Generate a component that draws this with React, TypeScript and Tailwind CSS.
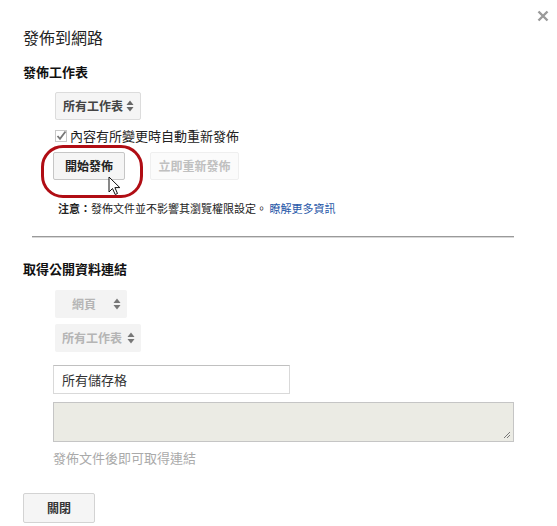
import React from 'react';

const font = { fontFamily: '"Noto Sans CJK TC", "Noto Sans CJK SC", sans-serif' };

function Arrows({ color }: { color: string }) {
  return (
    <svg width="8" height="12" viewBox="0 0 8 12">
      <path d="M4 0.5 L7.5 5 L0.5 5 Z" fill={color} />
      <path d="M4 11.5 L7.5 7 L0.5 7 Z" fill={color} />
    </svg>
  );
}

function SelectBox({ label, disabled, w, pl }: { label: string; disabled?: boolean; w: string; pl: string }) {
  return (
    <div
      className={
        'flex h-[28px] items-center justify-between pr-[6px] rounded-[2px] text-[12px] font-bold ' +
        w +
        ' ' +
        pl +
        (disabled
          ? ' bg-[#f3f3f3] text-[#b5b5b5]'
          : ' bg-[#f5f5f5] border border-[#dcdcdc] text-[#444]')
      }
    >
      <span className="leading-none">{label}</span>
      <Arrows color={disabled ? '#777' : '#666'} />
    </div>
  );
}

function Cursor() {
  return (
    <svg width="13" height="20" viewBox="0 0 13 20" className="absolute left-[55px] top-[24px]">
      <path
        d="M1 1 L1 16 L4.5 12.5 L7.2 18.5 L9.5 17.5 L6.9 11.6 L11.8 11.6 Z"
        fill="#fff"
        stroke="#111"
        strokeWidth="1"
        strokeLinejoin="round"
      />
    </svg>
  );
}

export default function App() {
  return (
    <div className="relative w-[557px] h-[526px] bg-white text-[#222]" style={font}>
      <svg width="12" height="12" viewBox="0 0 12 12" className="absolute left-[537px] top-[10px]">
        <path d="M1.5 1.5 L10.5 10.5 M10.5 1.5 L1.5 10.5" stroke="#9a9a9a" strokeWidth="2.4" />
      </svg>

      <div className="flex flex-col pl-[23px] pt-[27px]">
        <div className="h-[20px] text-[16px] leading-[20px] text-[#222]">發佈到網路</div>
        <div className="mt-[17px] h-[16px] text-[13px] leading-[16px] font-bold text-[#111]">發佈工作表</div>

        <div className="ml-[32px] mt-[12px]">
          <SelectBox label="所有工作表" w="w-[86px]" pl="pl-[7px]" />
        </div>

        <div className="ml-[32px] mt-[8px] flex h-[16px] items-center">
          <svg width="12" height="12" viewBox="0 0 12 12">
            <rect x="0.5" y="0.5" width="11" height="11" fill="#fff" stroke="#c8c8c8" />
            <path d="M2.5 6 L5 8.8 L10.5 1.5" fill="none" stroke="#777" strokeWidth="1.8" />
          </svg>
          <span className="ml-[3px] text-[13px] leading-[16px] text-[#222]">內容有所變更時自動重新發佈</span>
        </div>

        <div className="relative ml-[30px] mt-[8px] flex h-[28px] items-center gap-[25px]">
          <div className="flex h-[28px] w-[72px] items-center justify-center rounded-[2px] border border-[#c6c6c6] bg-[#f5f5f5] text-[12px] font-bold text-[#222]">
            開始發佈
          </div>
          <div className="flex h-[28px] w-[89px] items-center justify-center rounded-[2px] border border-[#efefef] bg-[#fbfbfb] text-[12px] font-bold text-[#c0c0c0]">
            立即重新發佈
          </div>
          <div className="absolute left-[-12px] top-[-7px] h-[53px] w-[102px] rounded-[22px] border-[3px] border-[#b00d14]" />
          <Cursor />
        </div>

        <div className="ml-[35px] mt-[21px] h-[14px] text-[11px] leading-[14px] text-[#222]">
          <span className="font-bold">注意：</span>發佈文件並不影響其瀏覽權限設定。 <span className="text-[#1f57a8]">瞭解更多資訊</span>
        </div>

        <div className="ml-[9px] mt-[21px] w-[482px] h-[2px] border-t border-[#9a9a9a] border-b border-b-[#d8d8d8]" />

        <div className="mt-[23px] h-[16px] text-[13px] leading-[16px] font-bold text-[#111]">取得公開資料連結</div>

        <div className="ml-[32px] mt-[13px]">
          <SelectBox label="網頁" disabled w="w-[72px]" pl="pl-[17px]" />
        </div>
        <div className="ml-[32px] mt-[6px]">
          <SelectBox label="所有工作表" disabled w="w-[86px]" pl="pl-[7px]" />
        </div>

        <div className="ml-[30px] mt-[13px] flex h-[29px] w-[237px] items-center border border-[#d9d9d9] border-t-[#c0c0c0] pl-[8px] text-[13px] text-[#333]">
          所有儲存格
        </div>

        <div className="relative ml-[30px] mt-[8px] h-[40px] w-[461px] border border-[#c5c5c5] bg-[#ebebe4]">
          <svg width="8" height="8" viewBox="0 0 8 8" className="absolute right-[2px] bottom-[2px]">
            <path d="M7 1 L1 7 M7 4 L4 7" stroke="#777" strokeWidth="1" />
          </svg>
        </div>

        <div className="ml-[30px] mt-[7px] h-[17px] text-[13px] leading-[17px] text-[#aaa]">發佈文件後即可取得連結</div>

        <div className="mt-[27px] flex h-[30px] w-[72px] items-center justify-center rounded-[2px] border border-[#d3d3d3] bg-[#f5f5f5] text-[12px] font-bold text-[#333]">
          關閉
        </div>
      </div>
    </div>
  );
}
